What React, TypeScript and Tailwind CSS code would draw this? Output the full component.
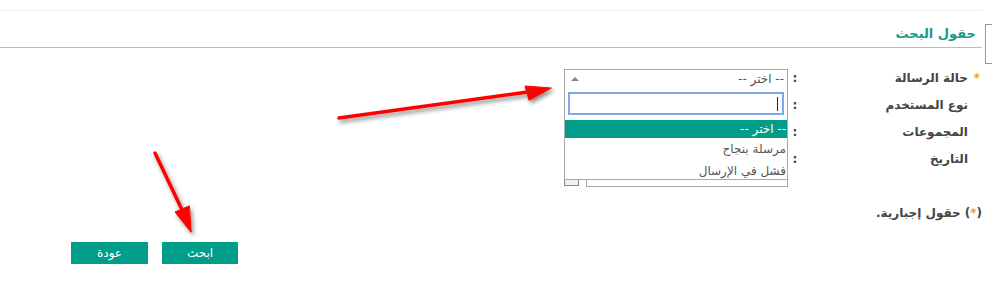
export default function App() {
  const font = { fontFamily: '"DejaVu Sans", "Noto Sans", sans-serif' };
  const rows = ["حالة الرسالة", "نوع المستخدم", "المجموعات", "التاريخ"];
  return (
    <div className="relative h-[281px] w-[992px] overflow-hidden bg-white text-[#444]" style={font}>
      {/* top rule */}
      <div className="mr-[10px] mt-[10px] border-t border-[#eeeeee]" />

      {/* section title */}
      <div dir="rtl" className="mr-[10px] h-[37px] border-b border-[#b7bdd0] pr-[6px] pt-[10px]">
        <span className="text-[13px] font-semibold text-[#1a9a8b]">حقول البحث</span>
      </div>
      <div className="absolute right-0 top-[24px] h-[40px] w-[7px] border border-r-0 border-[#9a9a9a]" />

      {/* form */}
      <div dir="rtl" className="mr-[10px] pt-[21px]">
        {rows.map((label, i) => (
          <div key={label} className="flex h-[27px] items-start">
            <div className="flex w-[180px] items-center text-[12px] font-semibold leading-[18px]">
              <span className="w-[14px] pr-[2px] text-[#f0a030]">{i === 0 ? "*" : ""}</span>
              <span>{label}</span>
            </div>
            <div className="w-[14px] text-center text-[12px] font-bold leading-[18px]">:</div>
            {i === 0 && (
              <div className="flex h-[20px] w-[224px] items-center justify-between border border-[#aaaaaa] pl-[6px] pr-[3px] text-[12px] text-[#555]">
                <span>-- اختر --</span>
                <span className="h-0 w-0 border-x-[4px] border-b-[4px] border-x-transparent border-b-[#888]" />
              </div>
            )}
            {i === 3 && (
              <div className="mt-[14px] flex h-[23px] w-[224px] shrink-0 items-end gap-[7px]">
                <div className="h-[23px] w-[202px] border border-[#aaaaaa]" />
                <div className="mb-[1px] h-[8px] w-[15px] border border-[#888] bg-[#f2f2f2]" />
              </div>
            )}
          </div>
        ))}
        <div className="mt-[27px] flex items-center text-[12px] font-semibold">
          <span>
            (<span className="text-[#f0a030]">*</span>)
          </span>
          <span className="mr-[4px]">حقول إجبارية.</span>
        </div>
      </div>

      {/* buttons */}
      <div className="ml-[71px] mt-[20px] flex flex-row-reverse justify-end gap-[14px]">
        <button className="h-[22px] w-[76px] bg-[#009e8a] text-[12px] text-white">ابحث</button>
        <button className="h-[22px] w-[77px] bg-[#009e8a] text-[12px] text-white">عودة</button>
      </div>

      {/* open select dropdown */}
      <div dir="rtl" className="absolute left-[564px] top-[88px] h-[92px] w-[224px] border border-t-0 border-[#aaaaaa] bg-white text-[12px] text-[#555]">
        <div className="px-[3px] pt-[4px]">
          <div className="flex h-[23px] items-center border-2 border-[#7fa8ea] pr-[4px]">
            <span className="h-[14px] w-px bg-[#222]" />
          </div>
        </div>
        <div className="mt-[5px] flex h-[18px] items-center bg-[#009e8a] pr-[1px] text-white">-- اختر --</div>
        <div className="flex h-[22px] items-center pr-[1px]">مرسلة بنجاح</div>
        <div className="flex h-[22px] items-center pr-[1px]">فشل في الإرسال</div>
      </div>

      {/* annotation arrows */}
      <svg className="pointer-events-none absolute left-0 top-0" width="992" height="281">
        <defs>
          <filter id="sh" x="-20%" y="-20%" width="140%" height="140%">
            <feDropShadow dx="2" dy="3" stdDeviation="2" floodColor="#000" floodOpacity="0.45" />
          </filter>
        </defs>
        <g filter="url(#sh)" fill="#ff0000" stroke="#ff0000" strokeLinecap="round">
          <line x1="339" y1="118" x2="528" y2="92" strokeWidth="3.5" />
          <polygon points="551,88 525,86 529,100" strokeWidth="1" />
          <line x1="155" y1="153" x2="184" y2="214" strokeWidth="3.5" />
          <polygon points="191,232 175,212 189,206" strokeWidth="1" />
        </g>
      </svg>
    </div>
  );
}
